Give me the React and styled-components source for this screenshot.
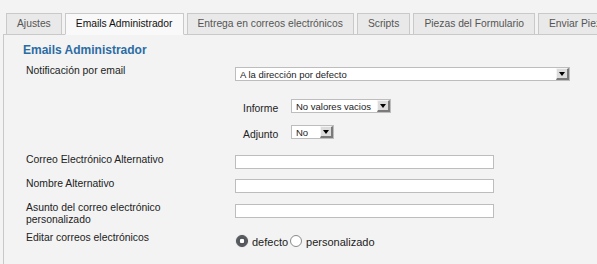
import React from "react";
import styled, { createGlobalStyle } from "styled-components";

const Global = createGlobalStyle`
  html, body { margin: 0; padding: 0; background: #f3f3f3; }
  body { font-family: "Liberation Sans", Arial, sans-serif; font-size: 11px; color: #222; }
`;

const Page = styled.div`
  padding: 13px 0 0 3px;
  width: 594px;
  height: 251px;
  overflow: hidden;
`;

const TabBar = styled.div`
  display: flex;
  gap: 3px;
  padding-left: 3px;
  margin-bottom: -1px;
  position: relative;
  z-index: 1;
  white-space: nowrap;
`;

const Tab = styled.div`
  flex: none;
  height: 20px;
  line-height: 20px;
  padding: 0 10px;
  border: 1px solid #c9c9c9;
  border-bottom-color: ${(p) => (p.$active ? "#f9f9f9" : "#c9c9c9")};
  background: ${(p) => (p.$active ? "#f9f9f9" : "#e9e9e9")};
  color: ${(p) => (p.$active ? "#111" : "#555")};
  font-size: 10.3px;
`;

const Panel = styled.div`
  border-top: 1px solid #c9c9c9;
  border-left: 1px solid #c9c9c9;
  background: #f3f3f3;
  min-height: 240px;
  padding: 8px 0 0 22px;
`;

const Heading = styled.div`
  margin-left: -3px;
  font-size: 12px;
  font-weight: bold;
  line-height: 14px;
  color: #2b6ca3;
`;

const Row = styled.div`
  display: grid;
  grid-template-columns: 209px auto;
  align-items: start;
  margin-top: ${(p) => p.$mt}px;
`;

const Label = styled.div`
  max-width: 175px;
  font-size: 10.4px;
  line-height: 12px;
  color: #222;
`;

const Field = styled.div`
  display: flex;
  align-items: center;
  padding-top: ${(p) => p.$pt || 0}px;
`;

const SubRow = styled.div`
  display: flex;
  align-items: center;
  margin-left: 217px;
  margin-top: ${(p) => p.$mt}px;
`;

const SubLabel = styled.div`
  width: 48px;
  font-size: 10.4px;
  line-height: 13px;
  margin: 2px 0 -2px;
  color: #222;
`;

const SelectBox = styled.div`
  box-sizing: border-box;
  display: flex;
  align-items: center;
  height: 14px;
  width: ${(p) => p.$w}px;
  background: #fff;
  border: 1px solid #bdbdbd;
  padding-left: 4px;
  font-size: 9.5px;
  color: #222;
`;

const SelectText = styled.span`
  flex: 1;
  white-space: nowrap;
  overflow: hidden;
`;

const ArrowButton = styled.span`
  box-sizing: border-box;
  flex: none;
  width: 13px;
  height: 12px;
  background: #dcdcdc;
  border-top: 1px solid #f4f4f4;
  border-left: 1px solid #f4f4f4;
  border-right: 2px solid #7a7a7a;
  border-bottom: 2px solid #7a7a7a;
  display: flex;
  align-items: center;
  justify-content: center;
`;

const Tri = styled.span`
  width: 0;
  height: 0;
  border-left: 3.5px solid transparent;
  border-right: 3.5px solid transparent;
  border-top: 4px solid #000;
`;

const TextInput = styled.div`
  box-sizing: border-box;
  width: 259px;
  height: 14px;
  background: #fff;
  border: 1px solid #bdbdbd;
`;

const RadioGroup = styled.div`
  display: flex;
  align-items: flex-end;
  padding-top: 3px;
  font-size: 11px;
  color: #222;
`;

const Radio = styled.span`
  box-sizing: border-box;
  width: 12px;
  height: 12px;
  border-radius: 50%;
  margin: 0 4px 0 1px;
  flex: none;
  background: ${(p) =>
    p.$checked ? "radial-gradient(circle, #fff 0 2px, #4e5257 2.6px, #6b6f74 100%)" : "#fff"};
  border: 1px solid ${(p) => (p.$checked ? "#4a4d52" : "#8a8a8a")};
  box-shadow: ${(p) => (p.$checked ? "0 0 1px #999" : "none")};
`;

const RadioText = styled.span`
  line-height: 13px;
  margin-bottom: -2px;
  margin-right: 1px;
`;

function Select({ w, value }) {
  return (
    <SelectBox $w={w}>
      <SelectText>{value}</SelectText>
      <ArrowButton>
        <Tri />
      </ArrowButton>
    </SelectBox>
  );
}

export default function App() {
  return (
    <>
      <Global />
      <Page>
        <TabBar>
          <Tab>Ajustes</Tab>
          <Tab $active>Emails Administrador</Tab>
          <Tab>Entrega en correos electrónicos</Tab>
          <Tab>Scripts</Tab>
          <Tab>Piezas del Formulario</Tab>
          <Tab>Enviar Piezas</Tab>
        </TabBar>
        <Panel>
          <Heading>Emails Administrador</Heading>
          <Row $mt={8}>
            <Label>Notificación por email</Label>
            <Field $pt={2}>
              <Select w={335} value="A la dirección por defecto" />
            </Field>
          </Row>
          <SubRow $mt={18}>
            <SubLabel>Informe</SubLabel>
            <Select w={100} value="No valores vacios" />
          </SubRow>
          <SubRow $mt={12}>
            <SubLabel>Adjunto</SubLabel>
            <Select w={43} value="No" />
          </SubRow>
          <Row $mt={15}>
            <Label>Correo Electrónico Alternativo</Label>
            <Field $pt={1}>
              <TextInput />
            </Field>
          </Row>
          <Row $mt={9}>
            <Label>Nombre Alternativo</Label>
            <Field $pt={1}>
              <TextInput />
            </Field>
          </Row>
          <Row $mt={9}>
            <Label>Asunto del correo electrónico personalizado</Label>
            <Field $pt={2}>
              <TextInput />
            </Field>
          </Row>
          <Row $mt={6}>
            <Label>Editar correos electrónicos</Label>
            <RadioGroup>
              <Radio $checked />
              <RadioText>defecto</RadioText>
              <Radio />
              <RadioText>personalizado</RadioText>
            </RadioGroup>
          </Row>
        </Panel>
      </Page>
    </>
  );
}
